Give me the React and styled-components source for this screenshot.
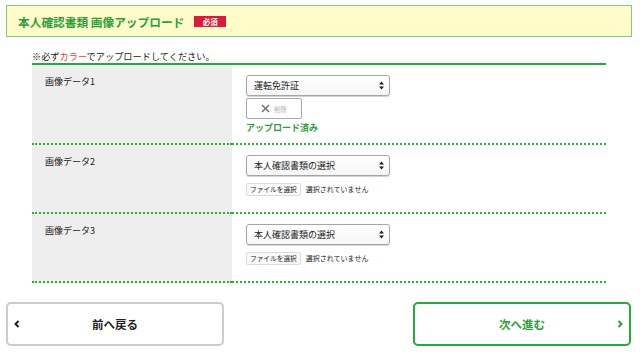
import React from "react";
import styled, { createGlobalStyle } from "styled-components";

const GlobalStyle = createGlobalStyle`
  html, body {
    margin: 0;
    padding: 0;
    background: #fff;
  }
  body {
    font-family: "Noto Sans CJK JP", "Noto Sans", sans-serif;
    color: #222;
  }
`;

const Page = styled.div`
  width: 640px;
  padding: 5px 8px 0 6px;
  box-sizing: border-box;
`;

const Header = styled.div`
  height: 32px;
  box-sizing: border-box;
  border: 1px solid #7fd07c;
  background: #fffcca;
  display: flex;
  align-items: center;
  padding-left: 11px;
`;

const Title = styled.h1`
  margin: 0;
  font-size: 11.7px;
  font-weight: 700;
  color: #2b9f3a;
`;

const Badge = styled.span`
  margin-left: 10px;
  width: 32px;
  height: 11px;
  background: #d81d3a;
  color: #fff;
  font-size: 7.5px;
  font-weight: 700;
  line-height: 11px;
  text-align: center;
`;

const Note = styled.p`
  margin: 13px 26px 0 26px;
  font-size: 9.2px;
  line-height: 13px;
`;

const Red = styled.span`
  color: #f23a3a;
`;

const Table = styled.div`
  margin: 0 26px;
  border-top: 2px solid #22ad3a;
`;

const Row = styled.div`
  display: grid;
  grid-template-columns: 200px 1fr;
`;

const Cell = styled.div`
  border-bottom: 2px dotted #22b52e;
  background: ${(p) => (p.$head ? "#eeeeee" : "#fff")};
  padding: ${(p) => (p.$head ? "10px 13px" : "10px 14px 7px")};
  font-size: 9px;
  line-height: 13px;
`;

const SelectBox = styled.div`
  width: 144px;
  height: 21px;
  box-sizing: border-box;
  border: 1px solid #a5a5a5;
  border-radius: 3px;
  background: linear-gradient(#fff, #f6f6f6);
  box-shadow: 0 1px 1px rgba(0, 0, 0, 0.18);
  display: flex;
  align-items: center;
  justify-content: space-between;
  padding: 0 5px 0 7px;
  font-size: 9px;
  color: #222;
`;

const DeleteButton = styled.button`
  margin-top: 2px;
  width: 56px;
  height: 21px;
  box-sizing: border-box;
  border: 1.5px solid #a8a8a8;
  border-radius: 2px;
  background: #fff;
  display: flex;
  align-items: center;
  justify-content: center;
  gap: 4px;
  padding: 0;
  font-family: inherit;
  font-size: 6.5px;
  color: #b0b0b0;
`;

const Uploaded = styled.div`
  margin: 2px 0 1px;
  font-size: 9px;
  font-weight: 700;
  line-height: 14px;
  color: #2b9f3a;
`;

const FileRow = styled.div`
  display: flex;
  align-items: center;
  gap: 5px;
  margin: 7px 0 9px;
`;

const FileButton = styled.span`
  display: inline-block;
  padding: 0 3px;
  height: 11px;
  line-height: 11px;
  border: 1px solid #dcdcdc;
  border-radius: 2px;
  background: #fafafa;
  font-size: 6.7px;
  color: #222;
`;

const FileStatus = styled.span`
  font-size: 7px;
  line-height: 11px;
  color: #222;
`;

const Nav = styled.div`
  display: flex;
  justify-content: space-between;
  margin-top: 19px;
  padding-right: 1px;
`;

const NavButton = styled.button`
  width: 218px;
  height: 44px;
  box-sizing: border-box;
  border: 2px solid ${(p) => (p.$primary ? "#22ad3a" : "#cccccc")};
  border-radius: 5px;
  background: #fff;
  color: ${(p) => (p.$primary ? "#2b9f3a" : "#222")};
  font-family: inherit;
  font-size: 11.5px;
  font-weight: 700;
  display: grid;
  grid-template-columns: 16px 1fr 16px;
  align-items: center;
  padding: 0 6px;

  & > svg:first-child {
    justify-self: start;
  }
  & > svg:last-child {
    justify-self: end;
  }
`;

const Chevron = ({ dir }) => (
  <svg width="6" height="8" viewBox="0 0 6 8">
    <polyline
      points={dir === "left" ? "4.5,1 1.5,4 4.5,7" : "1.5,1 4.5,4 1.5,7"}
      fill="none"
      stroke="currentColor"
      strokeWidth="2"
    />
  </svg>
);

const Arrows = () => (
  <svg width="5" height="9" viewBox="0 0 5 9">
    <polygon points="2.5,0.5 5,3.5 0,3.5" fill="#222" />
    <polygon points="0,5.5 5,5.5 2.5,8.5" fill="#222" />
  </svg>
);

const Cross = () => (
  <svg width="9" height="9" viewBox="0 0 9 9">
    <path d="M1 1 L8 8 M8 1 L1 8" stroke="#777" strokeWidth="1.6" />
  </svg>
);

const rows = [
  { label: "画像データ1", value: "運転免許証", uploaded: true },
  { label: "画像データ2", value: "本人確認書類の選択" },
  { label: "画像データ3", value: "本人確認書類の選択" },
];

export default function App() {
  return (
    <Page>
      <GlobalStyle />
      <Header>
        <Title>本人確認書類 画像アップロード</Title>
        <Badge>必須</Badge>
      </Header>
      <Note>
        ※必ず<Red>カラー</Red>でアップロードしてください。
      </Note>
      <Table>
        {rows.map((r) => (
          <Row key={r.label}>
            <Cell $head>{r.label}</Cell>
            <Cell>
              <SelectBox>
                <span>{r.value}</span>
                <Arrows />
              </SelectBox>
              {r.uploaded ? (
                <>
                  <DeleteButton>
                    <Cross />
                    削除
                  </DeleteButton>
                  <Uploaded>アップロード済み</Uploaded>
                </>
              ) : (
                <FileRow>
                  <FileButton>ファイルを選択</FileButton>
                  <FileStatus>選択されていません</FileStatus>
                </FileRow>
              )}
            </Cell>
          </Row>
        ))}
      </Table>
      <Nav>
        <NavButton>
          <Chevron dir="left" />
          <span>前へ戻る</span>
          <span />
        </NavButton>
        <NavButton $primary>
          <span />
          <span>次へ進む</span>
          <Chevron dir="right" />
        </NavButton>
      </Nav>
    </Page>
  );
}
